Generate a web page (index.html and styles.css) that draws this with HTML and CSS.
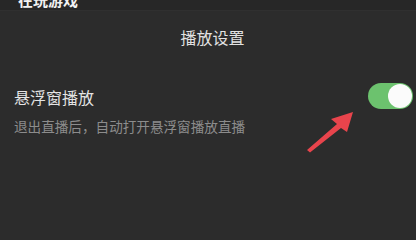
FILE: index.html
```html
<!DOCTYPE html>
<html lang="zh">
<head>
<meta charset="utf-8">
<link rel="stylesheet" href="styles.css">
</head>
<body>
<div class="page">
  <div class="topbar"><span class="toptext">在玩游戏</span></div>
  <div class="title">播放设置</div>
  <div class="setting">
    <div class="info">
      <div class="label">悬浮窗播放</div>
      <div class="desc">退出直播后，自动打开悬浮窗播放直播</div>
    </div>
    <div class="toggle"><div class="knob"></div></div>
  </div>
  <svg class="arrow" width="416" height="204" viewBox="0 0 416 204">
    <polygon points="307,150 310,152.5 341,128 347,132 353,112 331,119 337,124" fill="#e8444c"/>
  </svg>
</div>
</body>
</html>
```

FILE: styles.css
```css
html, body {
  margin: 0;
  padding: 0;
  background: #2c2c2c;
}
.page {
  position: relative;
  width: 416px;
  height: 204px;
  overflow: hidden;
  background: #2c2c2c;
  font-family: "Noto Sans CJK SC", "Noto Sans", sans-serif;
}
.topbar {
  height: 10px;
  overflow: hidden;
  background: #272727;
  border-bottom: 1px solid #303030;
  padding-left: 18px;
}
.toptext {
  display: block;
  margin-top: -8px;
  font-size: 15px;
  line-height: 15px;
  font-weight: 700;
  color: #f2f2f2;
}
.title {
  margin-top: 17px;
  text-align: center;
  padding-left: 9px;
  font-size: 16px;
  line-height: 18px;
  color: #e2e2e2;
}
.setting {
  display: flex;
  align-items: flex-start;
  justify-content: space-between;
  margin-top: 42px;
  padding: 0 3px 0 14px;
}
.label {
  font-size: 16px;
  line-height: 18px;
  color: #e4e4e4;
}
.desc {
  margin-top: 12px;
  font-size: 13.6px;
  line-height: 16px;
  color: #8c8c8c;
}
.toggle {
  margin-top: -5px;
  width: 45px;
  height: 26px;
  border-radius: 13px;
  background: #6cc26e;
  display: flex;
  align-items: center;
  justify-content: flex-end;
  padding-right: 1px;
  box-sizing: border-box;
}
.knob {
  width: 24px;
  height: 24px;
  border-radius: 50%;
  background: #fbfbfb;
}
.arrow {
  position: absolute;
  left: 0;
  top: 0;
}
```
